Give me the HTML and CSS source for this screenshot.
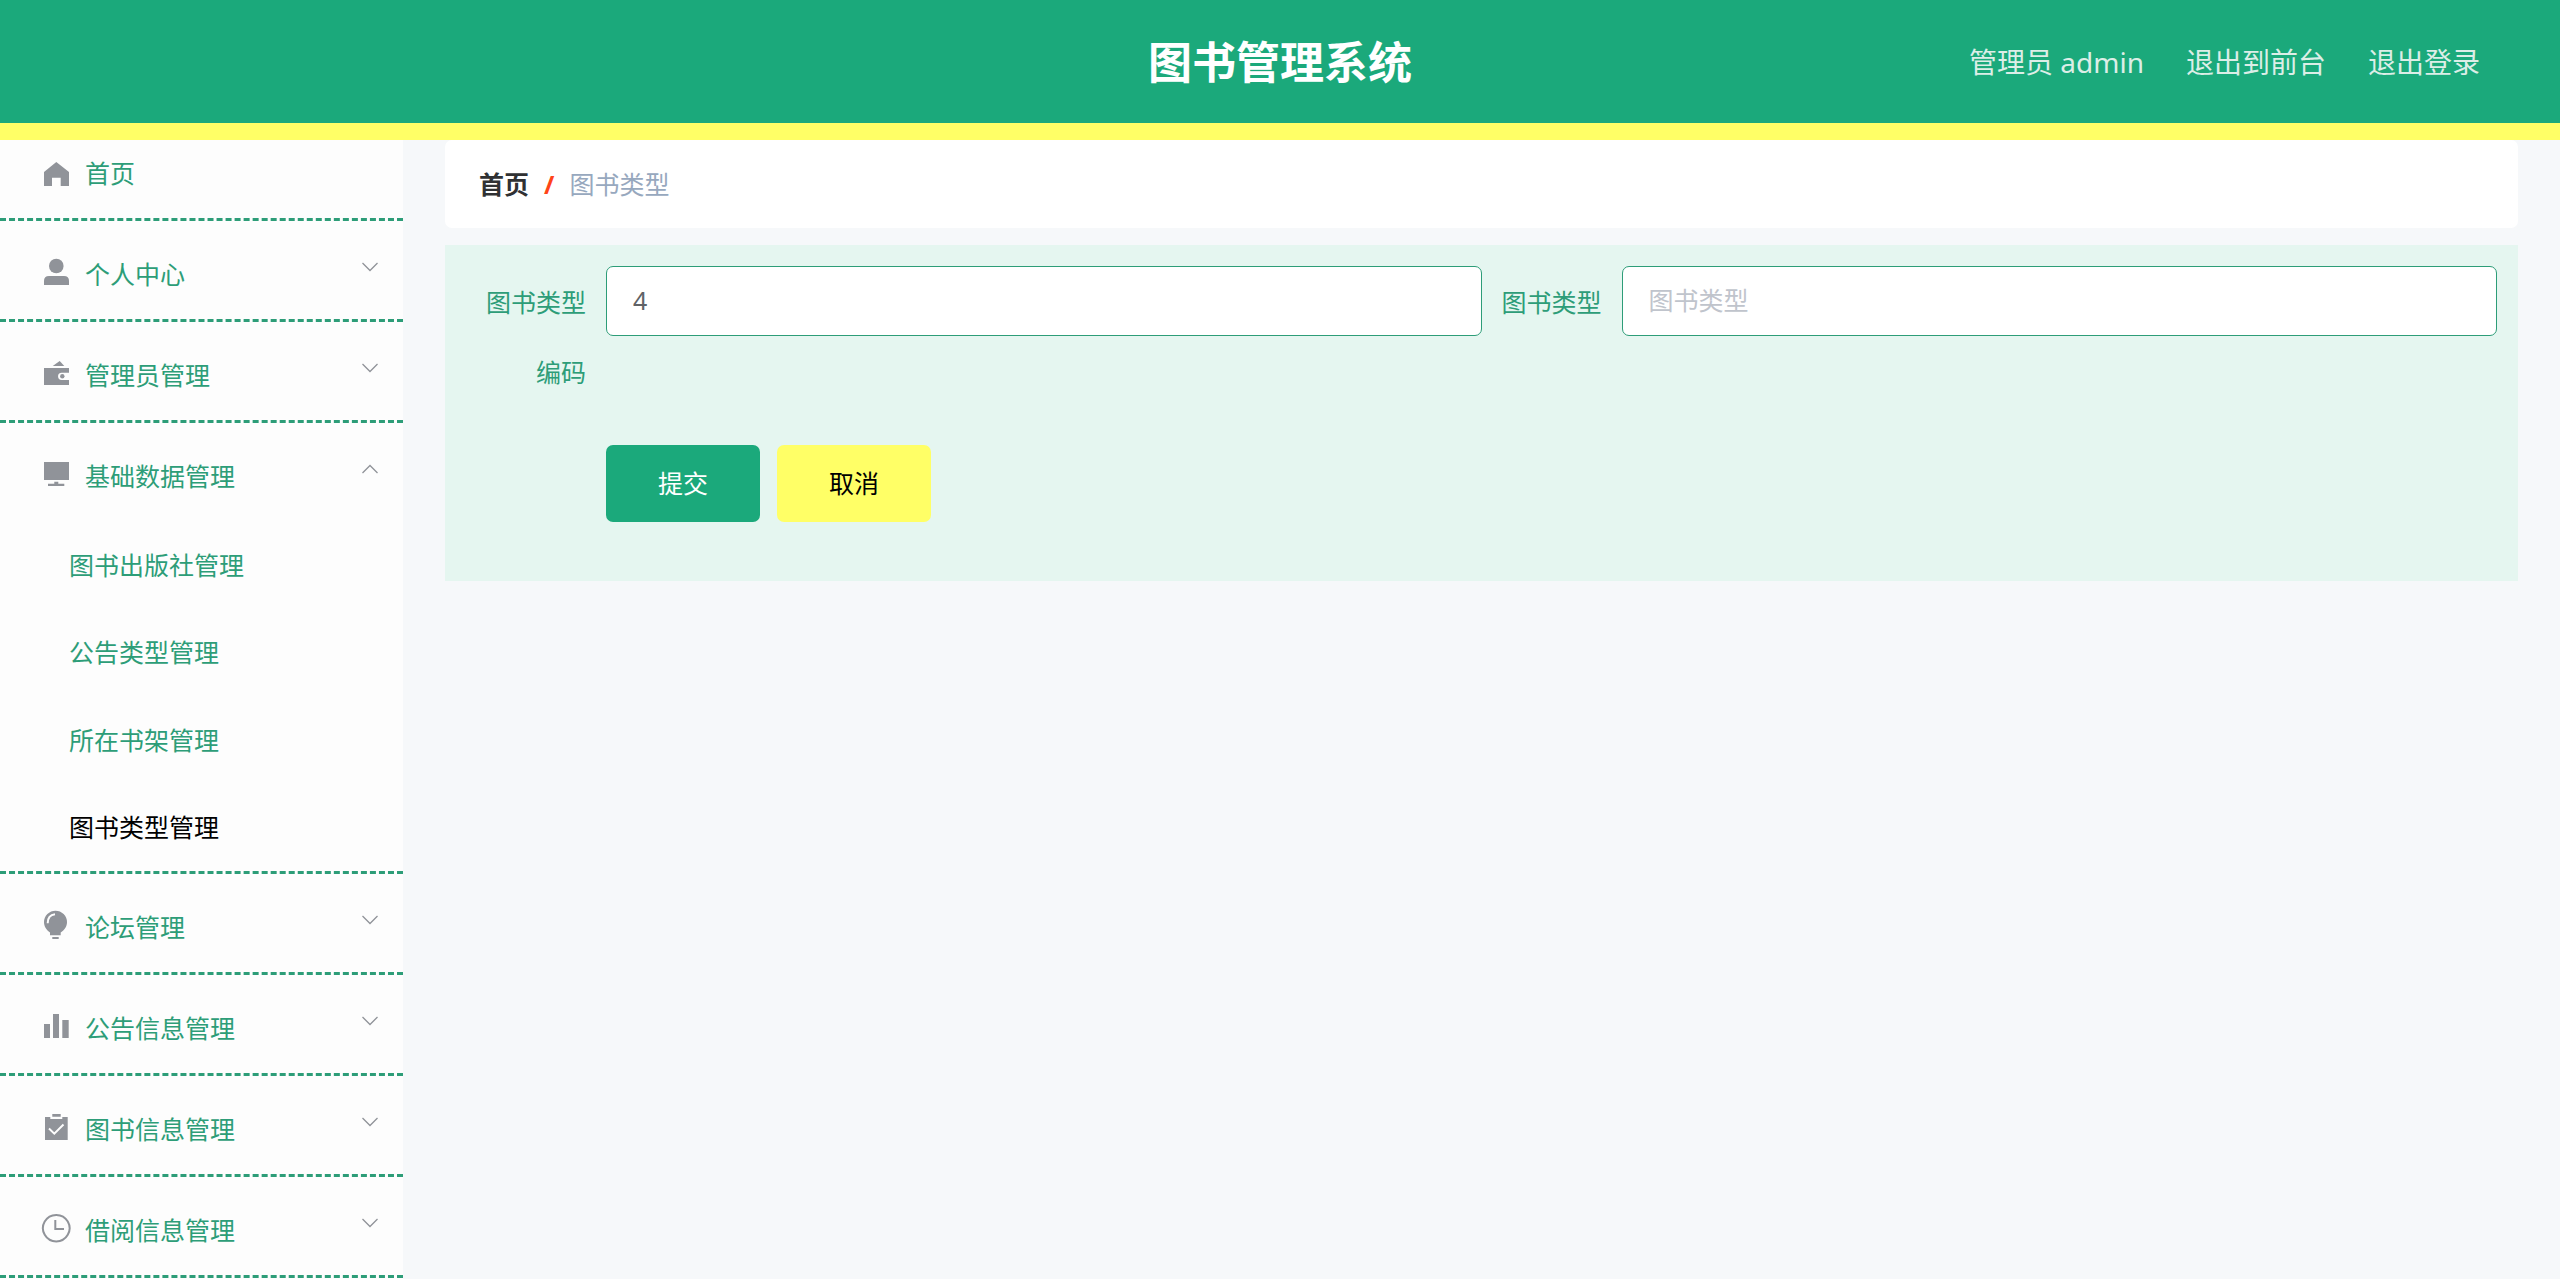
FILE: index.html
```html
<!DOCTYPE html>
<html lang="zh-CN">
<head>
<meta charset="utf-8">
<title>图书管理系统</title>
<link rel="stylesheet" href="styles.css">
</head>
<body>
<header class="topbar">
  <h1 class="topbar-title">图书管理系统</h1>
  <nav class="topbar-links">
    <span>管理员 admin</span>
    <a href="#front">退出到前台</a>
    <a href="#logout">退出登录</a>
  </nav>
</header>
<div class="layout">
  <nav class="sidebar">
    <ul class="menu">
      <li class="menu-item">
        <a class="menu-row" href="#home">
          <svg class="icon" viewBox="0 0 32 32"><path d="M16.3 7 29 17V31H20.700V22.700H12V31H4V17Z"/></svg>
          <span class="menu-text">首页</span>
        </a>
      </li>
      <li class="menu-item">
        <button class="menu-row" type="button">
          <svg class="icon" viewBox="0 0 32 32"><circle cx="16.300" cy="10" r="7.300"/><path d="M4 29V25Q4 20 9 20H24Q29 20 29 25V29Z"/></svg>
          <span class="menu-text">个人中心</span>
          <svg class="chevron" viewBox="0 0 16 10"><path d="M.5 1 8 8.500 15.500 1"/></svg>
        </button>
      </li>
      <li class="menu-item">
        <button class="menu-row" type="button">
          <svg class="icon" viewBox="0 0 32 32"><path d="M12.700 9 19.700 4 24.300 9Z"/><path d="M4 11H29V15.700H21.700A3.650 3.650 0 0 0 21.700 23H29V28H4Z"/><circle cx="22.300" cy="19.300" r="2.200"/></svg>
          <span class="menu-text">管理员管理</span>
          <svg class="chevron" viewBox="0 0 16 10"><path d="M.5 1 8 8.500 15.500 1"/></svg>
        </button>
      </li>
      <li class="menu-item">
        <button class="menu-row" type="button" aria-expanded="true">
          <svg class="icon" viewBox="0 0 32 32"><path d="M4 4H29V22H4ZM14.300 23.700H18.300V25.700H24.300V28H8V25.700H14.300Z"/></svg>
          <span class="menu-text">基础数据管理</span>
          <svg class="chevron" viewBox="0 0 16 10"><path d="M.5 9 8 1.500 15.500 9"/></svg>
        </button>
        <ul class="submenu">
          <li><a href="#press">图书出版社管理</a></li>
          <li><a href="#notice-type">公告类型管理</a></li>
          <li><a href="#shelf">所在书架管理</a></li>
          <li><a class="active" href="#book-type">图书类型管理</a></li>
        </ul>
      </li>
      <li class="menu-item">
        <button class="menu-row" type="button">
          <svg class="icon" viewBox="0 0 32 32"><path d="M10 26.300V23.500C6.500 21 4 17.500 4 13.200A11.500 11.500 0 0 1 27 13.200C27 17.500 24.500 21 20.700 23.500V26.300ZM12.300 28H18.700V30H12.300Z"/><path class="cut" d="M7.700 14.300Q7.700 6 15 5.300"/></svg>
          <span class="menu-text">论坛管理</span>
          <svg class="chevron" viewBox="0 0 16 10"><path d="M.5 1 8 8.500 15.500 1"/></svg>
        </button>
      </li>
      <li class="menu-item">
        <button class="menu-row" type="button">
          <svg class="icon" viewBox="0 0 32 32"><path d="M4 14H10V28H4ZM13 4H19V28H13ZM22.300 10H28.700V28H22.300Z"/></svg>
          <span class="menu-text">公告信息管理</span>
          <svg class="chevron" viewBox="0 0 16 10"><path d="M.5 1 8 8.500 15.500 1"/></svg>
        </button>
      </li>
      <li class="menu-item">
        <button class="menu-row" type="button">
          <svg class="icon" viewBox="0 0 32 32"><path d="M12.300 3H20.700V5.700H12.300ZM5 6H10.300V8H22.300V6H27.700V29H5Z"/><path class="cut" d="M9 17.500 14.300 22.700 23.500 13.500"/></svg>
          <span class="menu-text">图书信息管理</span>
          <svg class="chevron" viewBox="0 0 16 10"><path d="M.5 1 8 8.500 15.500 1"/></svg>
        </button>
      </li>
      <li class="menu-item">
        <button class="menu-row" type="button">
          <svg class="icon" viewBox="0 0 32 32"><path class="line" d="M16.300 2.900A13.300 13.300 0 1 1 16.200 2.900ZM15.300 8V17H24"/></svg>
          <span class="menu-text">借阅信息管理</span>
          <svg class="chevron" viewBox="0 0 16 10"><path d="M.5 1 8 8.500 15.500 1"/></svg>
        </button>
      </li>
    </ul>
  </nav>
  <main class="content">
    <nav class="breadcrumb">
      <a href="#home">首页</a>
      <span class="slash">/</span>
      <span class="current">图书类型</span>
    </nav>
    <form class="panel">
      <div class="fields">
        <div class="field">
          <label for="code">图书类型编码</label>
          <input id="code" type="text" value="4">
        </div>
        <div class="field">
          <label for="type">图书类型</label>
          <input id="type" type="text" placeholder="图书类型">
        </div>
      </div>
      <div class="actions">
        <button class="btn btn-primary" type="submit">提交</button>
        <button class="btn btn-cancel" type="button">取消</button>
      </div>
    </form>
  </main>
</div>
</body>
</html>
```
FILE: styles.css
```css
* { box-sizing: border-box; }

body {
  margin: 0;
  background: #f6f8fa;
  color: #2d9d78;
  font: 400 25px/32px "Noto Sans", "Noto Sans CJK SC", sans-serif;
}

ul { margin: 0; padding: 0; list-style: none; }
a { color: inherit; text-decoration: none; }
button, input { font: inherit; color: inherit; }

.topbar {
  position: fixed;
  inset: 0 0 auto;
  z-index: 2;
  display: grid;
  grid-template-columns: 1fr auto 1fr;
  align-items: center;
  height: 140px;
  padding: 0 80px;
  background: #1ba97b;
  border-bottom: 17px solid #ffff66;
}
.topbar-title {
  grid-column: 2;
  margin: 0;
  color: #fff;
  font-size: 44px;
  line-height: 64px;
  font-weight: 700;
}
.topbar-links {
  display: flex;
  justify-content: flex-end;
  gap: 42px;
  color: #dceee7;
  font-size: 28px;
}

.layout {
  display: flex;
  min-height: 100vh;
  padding-top: 120px;
}

.sidebar {
  flex: 0 0 403px;
  background: #fdfdfd;
}
.menu-item { border-bottom: 3px dashed #2d9d78; }
.menu-row {
  display: flex;
  align-items: center;
  gap: 13px;
  width: 100%;
  height: 98px;
  padding: 4px 25px 0 40px;
  border: 0;
  background: none;
  text-align: left;
  cursor: pointer;
}
.menu-text { flex: 1; padding-top: 4px; }
.icon {
  width: 32px;
  height: 32px;
  fill: #909399;
}
.icon .cut { fill: none; stroke: #fdfdfd; stroke-width: 2; }
.icon .line { fill: none; stroke: #909399; stroke-width: 2; }
.chevron {
  align-self: flex-start;
  width: 16px;
  height: 10px;
  margin-top: 37px;
  fill: none;
  stroke: #909399;
  stroke-width: 1.3;
}

.submenu {
  display: grid;
  grid-auto-rows: 1fr;
  height: 350px;
}
.submenu a {
  display: flex;
  align-items: center;
  height: 100%;
  padding-left: 69px;
}
.submenu .active { color: #000; }

.content {
  flex: 1;
  min-width: 0;
  padding: 20px 42px;
}
.breadcrumb {
  display: flex;
  align-items: center;
  gap: 15px;
  height: 88px;
  margin-bottom: 17px;
  padding: 0 34px;
  border-radius: 7px;
  background: #fff;
}
.breadcrumb a { color: #303133; font-weight: 700; }
.slash { color: #ff4418; font-weight: 700; }
.current { color: #97a8be; }

.panel {
  padding: 21px 21px 59px;
  background: #e5f6f0;
}
.fields {
  display: grid;
  grid-template-columns: 1fr 1fr;
}
.field {
  display: flex;
  align-items: flex-start;
}
.field label {
  flex: 0 0 140px;
  padding: 1px 20px 0 0;
  line-height: 70px;
  text-align: right;
}
.field input {
  flex: 1;
  min-width: 0;
  height: 70px;
  padding: 0 26px 2px;
  border: 1px solid #2d9d78;
  border-radius: 7px;
  background: #fff;
  color: #606266;
}
.field input::placeholder { color: #c0c4cc; opacity: 1; }
.actions {
  display: flex;
  gap: 17px;
  padding: 38px 0 0 140px;
}
.btn {
  width: 154px;
  height: 77px;
  padding: 0 0 2px;
  border: 0;
  border-radius: 7px;
  cursor: pointer;
}
.btn-primary { background: #1ba97b; color: #fff; }
.btn-cancel { background: #ffff66; color: #000; }
```
